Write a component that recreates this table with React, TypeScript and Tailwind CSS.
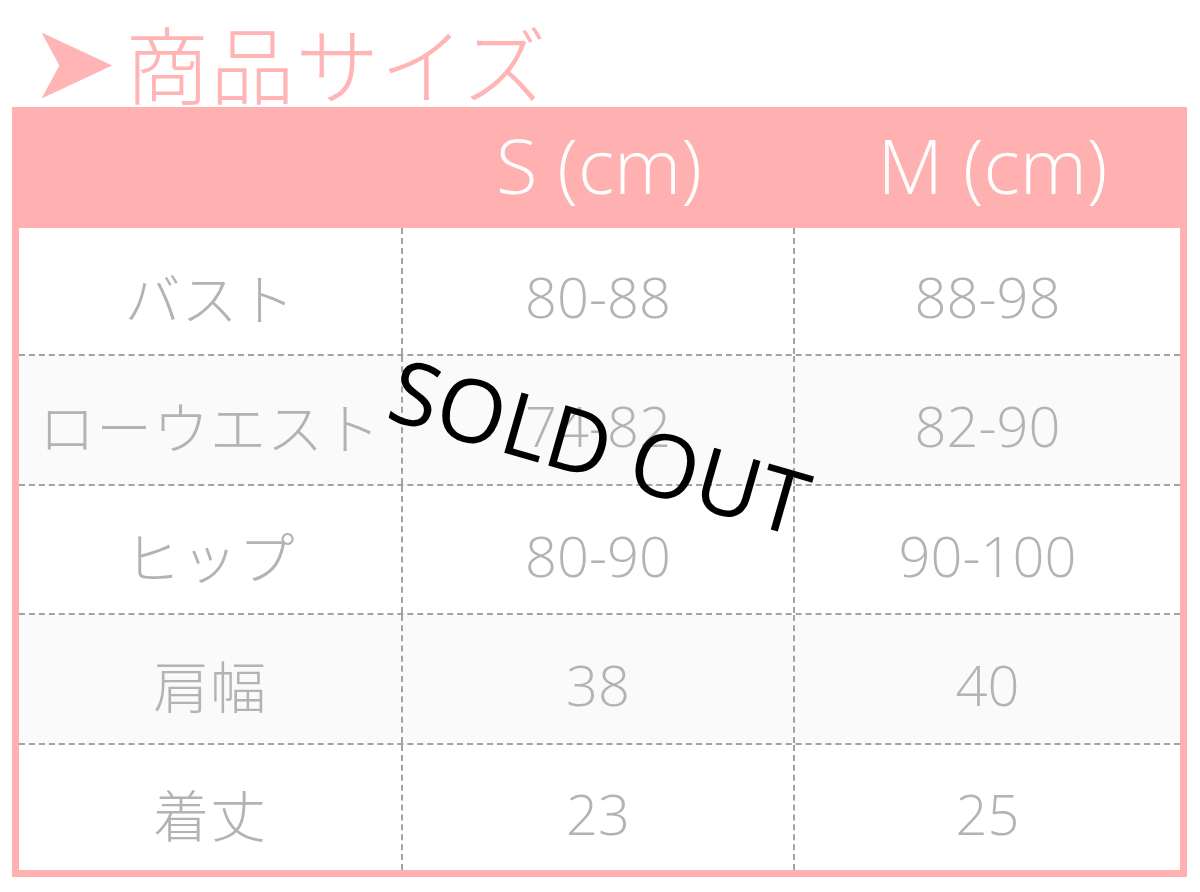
const rows = [
  { label: "バスト", s: "80-88", m: "88-98", shade: false, h: "h-[128px]" },
  { label: "ローウエスト", s: "74-82", m: "82-90", shade: true, h: "h-[130px]" },
  { label: "ヒップ", s: "80-90", m: "90-100", shade: false, h: "h-[129px]" },
  { label: "肩幅", s: "38", m: "40", shade: true, h: "h-[130px]" },
  { label: "着丈", s: "23", m: "25", shade: false, h: "h-[125px]" },
];

export default function App() {
  return (
    <div className="relative h-[892px] w-[1200px] overflow-hidden bg-white font-['Open_Sans','Noto_Sans_CJK_JP',sans-serif]">
      {/* Title */}
      <div className="flex h-[107px] items-start pl-[30px] pt-[20px] leading-none text-[#ffb5b5]">
        <span className="font-['DejaVu_Sans',sans-serif] text-[104px] leading-[84px]">➤</span>
        <span className="ml-[8px] font-['Noto_Sans_CJK_JP',sans-serif] text-[84px] font-light tracking-[1px] leading-[84px]">
          商品サイズ
        </span>
      </div>

      {/* Table */}
      <div className="ml-[12px] w-[1175px] bg-[#ffb1b1] px-[7px] pb-[7px]">
        <div className="grid h-[121px] grid-cols-[384px_392px_1fr] items-center text-center text-[76px] font-light leading-none text-white">
          <div />
          <div className="pb-[6px]">S (cm)</div>
          <div className="pb-[6px] pl-[10px]">M (cm)</div>
        </div>
        <div className="bg-white">
          {rows.map((r, i) => (
            <div
              key={r.label}
              className={`grid grid-cols-[384px_392px_1fr] text-center text-[56px] font-light leading-none text-[#b3b3b3] ${r.h} ${
                r.shade ? "bg-[#fafafa]" : "bg-white"
              } ${i < rows.length - 1 ? "border-b-2 border-dashed border-[#a3a3a3]" : ""}`}
            >
              <div className="flex items-center justify-center overflow-visible whitespace-nowrap border-r-2 border-dashed border-[#a3a3a3] pt-[10px] font-['Noto_Sans_CJK_JP',sans-serif] tracking-[1px]">
                {r.label}
              </div>
              <div className="flex items-center justify-center border-r-2 border-dashed border-[#a3a3a3] pt-[10px]">
                {r.s}
              </div>
              <div className="flex items-center justify-center pt-[10px]">{r.m}</div>
            </div>
          ))}
        </div>
      </div>

      {/* Sold out stamp */}
      <div className="absolute left-[600px] top-[445px] -translate-x-1/2 -translate-y-1/2 rotate-[16deg] whitespace-nowrap font-['Open_Sans',sans-serif] text-[88px] leading-none text-black">
        SOLD OUT
      </div>
    </div>
  );
}
